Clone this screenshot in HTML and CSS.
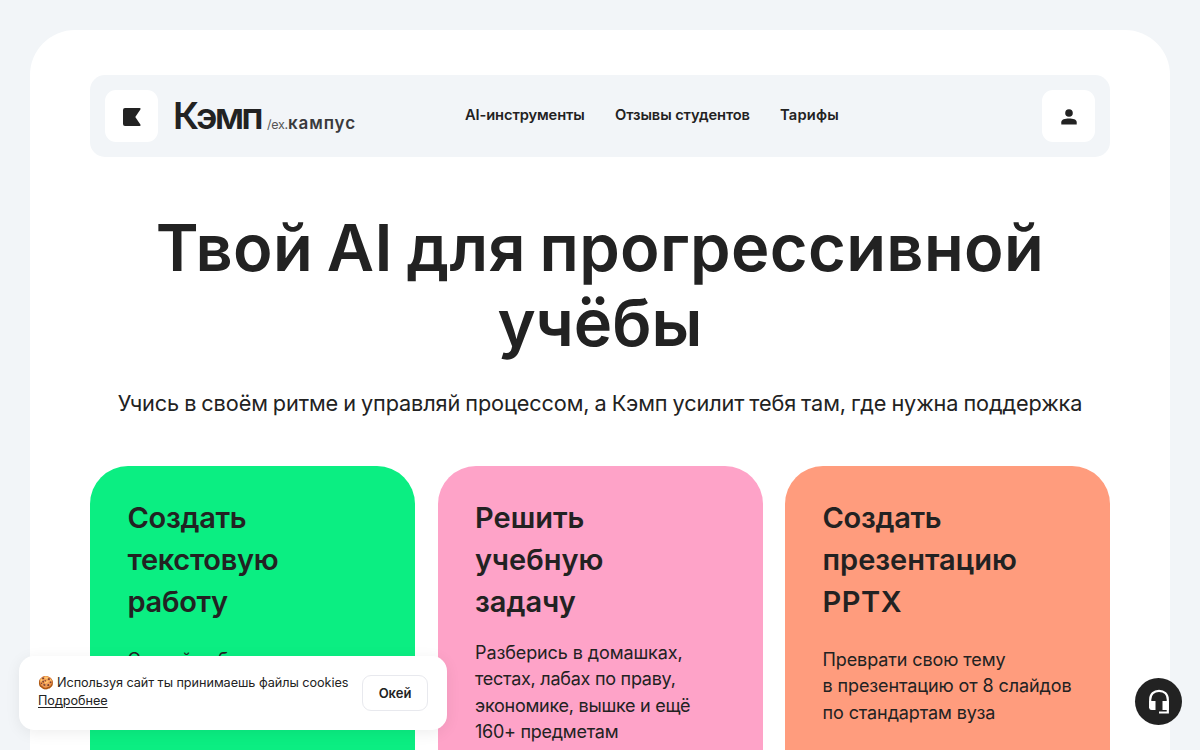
FILE: index.html
```html
<!DOCTYPE html>
<html lang="ru">
<head>
<meta charset="utf-8">
<title>Кэмп</title>
<link rel="stylesheet" href="styles.css">
</head>
<body>
<div class="page">
  <header class="header">
    <a class="tile"><svg width="18" height="18" viewBox="0 0 18 18"><path d="M2 0H16.500Q18.300 .3 17.200 1.800L12.300 9L17.200 16.200Q18.300 17.700 16.500 18H2Q0 18 0 16V2Q0 0 2 0Z" fill="#222"/></svg></a>
    <div class="logo"><span class="logo-name">Кэмп</span><span class="logo-ex">/ex.</span><span class="logo-campus">кампус</span></div>
    <nav class="nav"><a class="nav-tools">AI-инструменты</a><a class="nav-reviews">Отзывы студентов</a><a class="nav-prices">Тарифы</a></nav>
    <a class="tile tile-user"><svg width="16" height="16" viewBox="0 0 16 16" fill="#222"><circle cx="8" cy="4" r="3.8"/><path d="M.3 15.6V13.2C.3 10.7 4 9.6 8 9.6S15.7 10.7 15.7 13.2V15.6Z"/></svg></a>
  </header>
  <h1 class="title"><span class="title-wide">Твой AI для прогрессивной</span><br>учёбы</h1>
  <p class="lead">Учись в своём ритме и управляй процессом, а Кэмп усилит тебя там, где нужна поддержка</p>
  <main class="cards">
    <section class="card green"><h2 class="snug">Создать<br>текстовую<br>работу</h2><p class="text loose">Создай работу</p></section>
    <section class="card pink"><h2>Решить<br>учебную<br>задачу</h2><p class="text text-high"><span class="loose">Разберись в домашках,</span><br>тестах, лабах по праву,<br>экономике, вышке и ещё<br>160+ предметам</p></section>
    <section class="card orange"><h2><span class="snug">Создать</span><br>презентацию<br><span class="wide">PPTX</span></h2><p class="text loose">Преврати свою тему<br>в презентацию от 8 слайдов<br>по стандартам вуза</p></section>
  </main>
</div>
<aside class="cookie">
  <div class="cookie-text"><span class="emoji">🍪</span><span class="cookie-msg">Используя сайт ты принимаешь файлы cookies</span><br><a class="more">Подробнее</a></div>
  <button class="ok">Окей</button>
</aside>
<button class="help"><svg width="22" height="26" viewBox="0 0 22 26" fill="none" stroke="#fff"><path d="M2.200 19V10.500C2.200 5 6 1.800 11 1.800S19.800 5 19.800 10.500V23.500H11" stroke-width="2.200"/><path d="M1.200 12H7.500V21H3.800Q1.200 21 1.200 18.500ZM14.500 12H20.800V21H14.500Z" fill="#fff" stroke="none"/></svg></button>
</body>
</html>
```

FILE: styles.css
```css
* { box-sizing: border-box; }
body { margin: 0; height: 750px; overflow: hidden; padding: 30px 30px 0; background: #f2f5f8; color: #222; font-family: Inter, "Liberation Sans", sans-serif; }
.page { height: 720px; overflow: hidden; display: flex; flex-direction: column; padding: 45px 60px 0; background: #fff; border-radius: 45px 45px 0 0; }
.header { flex: none; display: flex; height: 82px; padding: 15px; background: #f2f5f8; border-radius: 15px; }
.tile { flex: none; display: flex; align-items: center; justify-content: center; width: 53px; height: 52px; padding-top: 1px; border-radius: 11px; background: #fff; }
.tile-user { margin-left: auto; }
.logo { display: flex; align-items: baseline; width: 307px; padding-left: 15px; line-height: 52px; white-space: nowrap; }
.logo-name { width: 94px; font-size: 37px; font-weight: 600; letter-spacing: -2.900px; }
.logo-ex { width: 21px; font-size: 12.500px; color: #555; letter-spacing: -.3px; }
.logo-campus { font-size: 17px; font-weight: 600; letter-spacing: .9px; color: #3a3a3c; }
.nav { display: flex; gap: 30px; font-size: 14.700px; font-weight: 600; line-height: 50px; white-space: nowrap; }
.nav-tools { width: 120px; letter-spacing: -.12px; }
.nav-reviews { width: 135px; letter-spacing: -.1px; }
.nav-prices { letter-spacing: .2px; }
.title { margin: 53px 0 0; font-size: 65px; line-height: 75px; font-weight: 600; text-align: center; white-space: nowrap; }
.title-wide { letter-spacing: .35px; word-spacing: -3px; }
.lead { margin: 27px 0 0; font-size: 21.700px; line-height: 32px; text-align: center; white-space: nowrap; letter-spacing: -.12px; word-spacing: -.9px; }
.cards { flex: 1; min-height: 0; display: grid; grid-template-columns: repeat(3, minmax(0, 1fr)); gap: 22.500px; margin-top: 47px; }
.card { border-radius: 38px 38px 0 0; padding: 31px 0 0 37.500px; white-space: nowrap; }
.green { background: #0bee82; }
.pink { background: #fea3c8; }
.orange { background: #ff9c7d; }
.card h2 { margin: 0; font-size: 29px; line-height: 42px; font-weight: 600; letter-spacing: 0; }
.card .snug { letter-spacing: -.3px; }
.card .wide { letter-spacing: .6px; }
.card .text { margin: 24px 0 0; font-size: 18px; line-height: 26.250px; letter-spacing: -.26px; }
.card .text-high { margin-top: 17px; }
.card .loose { letter-spacing: -.1px; }
.cookie { position: absolute; left: 19px; top: 656px; width: 428px; height: 74px; display: flex; justify-content: space-between; align-items: center; padding: 0 19px; background: #fff; border-radius: 15px; box-shadow: 0 3px 15px rgba(0,0,0,.07); }
.cookie-text { margin-bottom: 3px; font-size: 12.700px; line-height: 18px; white-space: nowrap; letter-spacing: -.06px; }
.emoji { margin-right: 3px; }
.more { text-decoration: underline; text-underline-offset: 2px; }
.ok { width: 66px; height: 36px; padding: 0; border: 1px solid #e8e9ee; border-radius: 9px; background: #fff; color: #222; font: 600 13px Inter, sans-serif; }
.help { position: absolute; left: 1135px; top: 678px; width: 47px; height: 47px; padding: 0; border: 0; border-radius: 50%; background: #222; display: flex; align-items: center; justify-content: center; }
```
